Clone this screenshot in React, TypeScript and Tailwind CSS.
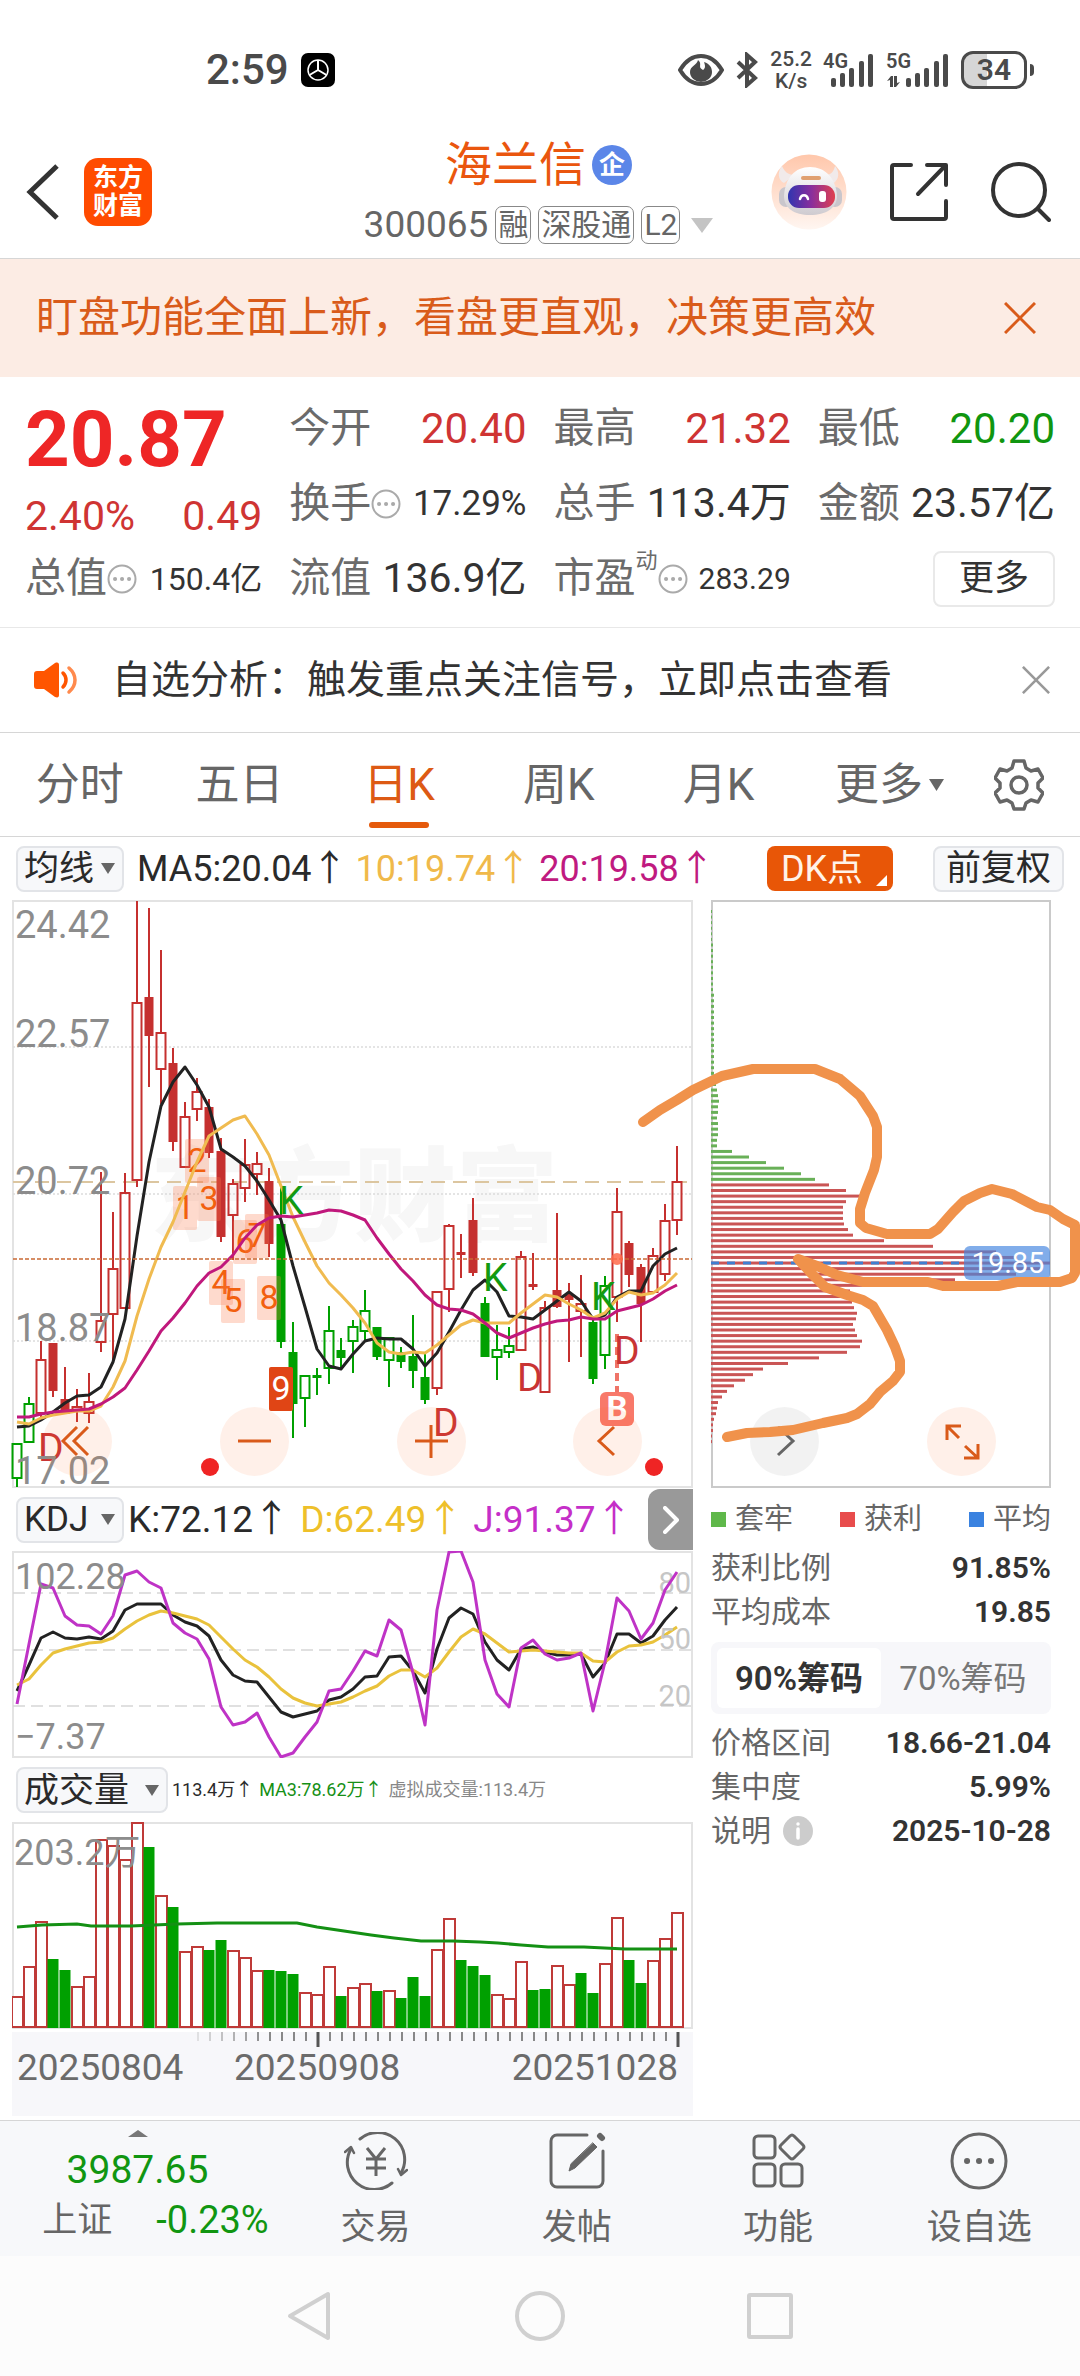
import { useState } from "react";
import type { ReactNode } from "react";
import clsx from "clsx";

type Candle = [kind: "r" | "R" | "g" | "G", high: number, top: number, bottom: number, low: number];

const RED = "#c5302f";
const GREEN = "#00a000";

// r / g = hollow body, R / G = solid body
const CANDLES: Candle[] = [
  ["g", 544, 544, 578, 587],
  ["g", 497, 504, 542, 542],
  ["r", 441, 460, 513, 518],
  ["R", 443, 443, 491, 497],
  ["R", 467, 499, 514, 514],
  ["r", 489, 507, 511, 522],
  ["r", 473, 502, 513, 523],
  ["r", 272, 421, 442, 452],
  ["r", 312, 369, 414, 463],
  ["r", 273, 293, 408, 408],
  ["r", 1, 103, 280, 287],
  ["R", 8, 97, 136, 187],
  ["r", 50, 133, 169, 204],
  ["R", 148, 163, 242, 251],
  ["r", 202, 217, 267, 267],
  ["r", 178, 192, 209, 221],
  ["R", 199, 207, 253, 258],
  ["R", 238, 251, 337, 342],
  ["r", 279, 284, 315, 360],
  ["r", 239, 265, 288, 302],
  ["r", 252, 264, 274, 295],
  ["R", 268, 281, 344, 357],
  ["G", 286, 324, 442, 448],
  ["G", 422, 452, 504, 538],
  ["g", 476, 476, 498, 527],
  ["G", 468, 475, 478, 495],
  ["g", 406, 431, 468, 484],
  ["G", 438, 450, 458, 469],
  ["g", 420, 427, 441, 473],
  ["g", 390, 411, 431, 441],
  ["G", 427, 427, 457, 460],
  ["g", 438, 438, 460, 487],
  ["G", 447, 452, 462, 468],
  ["G", 415, 456, 471, 488],
  ["G", 452, 477, 500, 504],
  ["r", 391, 392, 488, 495],
  ["r", 324, 326, 389, 412],
  ["R", 334, 352, 355, 378],
  ["R", 298, 320, 373, 376],
  ["G", 397, 403, 457, 457],
  ["g", 425, 450, 457, 480],
  ["g", 427, 446, 452, 458],
  ["r", 351, 357, 450, 450],
  ["R", 353, 384, 387, 390],
  ["r", 401, 408, 492, 493],
  ["R", 313, 390, 407, 408],
  ["R", 383, 395, 400, 462],
  ["r", 375, 404, 411, 457],
  ["G", 416, 422, 479, 484],
  ["g", 376, 386, 455, 469],
  ["r", 288, 312, 397, 422],
  ["R", 341, 343, 375, 387],
  ["R", 364, 367, 404, 442],
  ["r", 348, 356, 392, 392],
  ["r", 304, 321, 374, 381],
  ["r", 246, 282, 320, 335],
];

const MA5 = [
  527, 526, 520, 512, 503, 496, 495, 487, 462, 419, 336, 262, 206, 182, 167, 185, 207, 249, 257, 266, 281, 300, 320,
  366, 407, 449, 466, 469, 454, 441, 438, 439, 439, 449, 466, 453, 432, 410, 390, 380, 392, 416, 417, 419, 410, 401,
  392, 401, 419, 415, 397, 391, 391, 366, 354, 348,
];
const MA10 = [
  522, 524, 518, 515, 513, 511, 511, 506, 487, 461, 416, 379, 347, 322, 292, 262, 236, 228, 220, 216, 234, 255, 286,
  317, 342, 366, 383, 395, 408, 423, 443, 452, 454, 452, 453, 445, 435, 425, 420, 423, 423, 423, 413, 404, 395, 397,
  404, 410, 418, 413, 399, 392, 395, 393, 385, 373,
];
const MA20 = [
  517, 517, 514, 512, 511, 510, 509, 504, 497, 488, 470, 451, 431, 418, 403, 386, 373, 367, 355, 338, 325, 318, 316,
  317, 315, 313, 310, 311, 315, 320, 338, 354, 369, 381, 395, 405, 409, 410, 414, 423, 433, 438, 433, 428, 424, 421,
  420, 417, 419, 419, 411, 408, 405, 399, 391, 385,
];

const K_LINE = [
  140, 114, 87, 81, 87, 88, 86, 88, 80, 59, 53, 53, 53, 64, 71, 75, 85, 109, 124, 130, 131, 146, 161, 166, 163, 160,
  149, 146, 138, 126, 125, 106, 105, 120, 142, 98, 67, 57, 63, 91, 109, 119, 98, 96, 101, 104, 104, 103, 126, 112, 83,
  83, 92, 85, 69, 56,
];
const D_LINE = [
  134, 128, 114, 102, 98, 95, 92, 91, 87, 78, 70, 64, 60, 62, 65, 68, 74, 86, 98, 109, 116, 126, 138, 147, 152, 155,
  153, 151, 146, 140, 135, 125, 119, 119, 126, 117, 101, 86, 78, 83, 92, 101, 100, 99, 100, 101, 102, 102, 110, 111,
  101, 95, 94, 91, 84, 76,
];
const J_LINE = [
  153, 93, 33, 37, 65, 74, 75, 83, 65, 24, 20, 31, 37, 72, 82, 88, 108, 156, 174, 171, 162, 186, 206, 202, 186, 171,
  140, 138, 120, 100, 105, 69, 79, 122, 174, 59, 1, 0, 31, 109, 143, 156, 97, 89, 103, 109, 107, 102, 160, 111, 47, 60,
  88, 72, 39, 21,
];

const VOLUME_TOPS = [
  175, 145, 100, 137, 148, 165, 155, 18, 24, 38, 1, 25, 74, 85, 130, 125, 128, 118, 129, 136, 149, 148, 149, 152, 171,
  173, 145, 174, 166, 162, 169, 169, 176, 155, 174, 128, 97, 138, 144, 153, 173, 177, 140, 168, 167, 144, 163, 151, 171,
  142, 96, 138, 161, 139, 117, 91,
];
const VOLUME_DOWN = new Set([3, 4, 11, 13, 16, 17, 21, 22, 23, 27, 30, 32, 33, 34, 37, 38, 39, 43, 44, 47, 48, 51, 52]);

// chips held at a loss (above the price), top to bottom
const CHIPS_LOSS = [
  ...Array(6).fill(1),
  ...Array(9).fill(2),
  ...Array(16).fill(3),
  5, 6, 7, 8, 7, 7, 6, 7, 7, 7, 6, 6, 21, 38, 55, 73, 90, 104,
] as number[];
// chips in profit
const CHIPS_PROFIT = [
  118, 135, 149, 135, 132, 132, 132, 133, 137, 142, 173, 222, 285, 306, 339, 329, 305, 244, 174, 139, 136, 141, 143,
  146, 145, 142, 144, 146, 151, 149, 136, 108, 77, 52, 42, 34, 23, 16, 11, 7, 6, 5, 3, 2, 2, 1, 1,
];

const COUNT_BOXES = [286, 239, 277, 361, 379, 320, 314, 376, 467];

const SIGNALS: [string, number, number][] = [
  ["K", 267, 314],
  ["K", 471, 391],
  ["K", 579, 410],
  ["D", 26, 561],
  ["D", 505, 491],
  ["D", 421, 536],
  ["D", 602, 464],
];

const TABS = ["分时", "五日", "日K", "周K", "月K"];

const px = (i: number) => 5 + i * 12;
const toPoints = (ys: number[]) => ys.map((y, i) => `${px(i)},${y}`).join(" ");

function Triangle({ className }: { className?: string }) {
  return (
    <svg viewBox="0 0 14 11" preserveAspectRatio="none" className={className} fill="currentColor" aria-hidden="true">
      <path d="M0 0h14L7 11z" />
    </svg>
  );
}

function Close({ className }: { className?: string }) {
  return (
    <svg viewBox="0 0 32 32" className={className} fill="none" stroke="currentColor" strokeWidth="3" aria-hidden="true">
      <path d="M1 1l30 30M31 1L1 31" />
    </svg>
  );
}

function StatusBar() {
  return (
    <div className="flex h-[140px] items-center justify-between pr-[46px] pl-[206px] text-[#4a4a4a]">
      <div className="flex items-center gap-3">
        <span className="text-[42px] leading-none font-medium">2:59</span>
        <svg viewBox="0 0 34 34" className="size-[34px]" aria-hidden="true">
          <rect width="34" height="34" rx="7" />
          <g fill="none" stroke="#fff" strokeWidth="1.5">
            <circle cx="17" cy="17" r="10" />
            <path d="M17 7v10M17 17l-8.500 5M17 17l8.500 5" strokeWidth="2" />
          </g>
        </svg>
      </div>
      <div className="flex items-center gap-3">
        <svg viewBox="0 0 46 32" className="h-8 w-[46px]" aria-hidden="true">
          <path
            d="M2 16C8 6 15 2 23 2s15 4 21 14c-6 10-13 14-21 14S8 26 2 16z"
            fill="none"
            stroke="currentColor"
            strokeWidth="4"
          />
          <path d="M20 6c5 4-1 7 5 10 3-2 2-5 1-8 6 2 8 6 8 10a11 10 0 0 1-22 0c0-6 7-7 8-12z" fill="currentColor" />
        </svg>
        <svg viewBox="0 0 22 36" className="h-9 w-[22px]" fill="none" stroke="currentColor" strokeWidth="4" aria-hidden="true">
          <path d="M2 10l17 16-8 7V3l8 7L2 26" />
        </svg>
        <div className="text-center text-[21px] leading-[22px] font-medium">
          <div>25.2</div>
          <div>K/s</div>
        </div>
        <svg viewBox="0 0 50 36" className="h-9 w-[50px] overflow-visible" fill="currentColor" aria-hidden="true">
          <text x="-1" y="16" fontSize="20" fontWeight="600">
            4G
          </text>
          <rect x="7" y="26" width="5" height="9" rx="2" />
          <rect x="16" y="21" width="5" height="14" rx="2" />
          <rect x="25" y="16" width="5" height="19" rx="2" />
          <rect x="35" y="9" width="5" height="26" rx="2" />
          <rect x="44" y="2" width="5" height="33" rx="2" />
        </svg>
        <svg viewBox="0 0 63 36" className="h-9 w-[63px] overflow-visible" fill="currentColor" aria-hidden="true">
          <text x="0" y="16" fontSize="20" fontWeight="600">
            5G
          </text>
          <path d="M1 29l4-5h2v11H4v-7zM14 30l-4 5H8V24h3v7z" />
          <rect x="20" y="26" width="5" height="9" rx="2" />
          <rect x="29" y="21" width="5" height="14" rx="2" />
          <rect x="38" y="16" width="5" height="19" rx="2" />
          <rect x="48" y="9" width="5" height="26" rx="2" />
          <rect x="57" y="2" width="5" height="33" rx="2" />
        </svg>
        <div className="flex items-center gap-[3px]">
          <div className="flex h-[38px] w-[66px] items-center justify-center rounded-xl border-[3px] border-current bg-linear-to-r from-[#d6d6d6] from-38% to-white to-38% text-[30px] leading-none font-semibold">
            34
          </div>
          <div className="h-3 w-1 rounded-r bg-current" />
        </div>
      </div>
    </div>
  );
}

function RobotAvatar() {
  return (
    <svg viewBox="0 0 76 76" className="size-[76px]" aria-hidden="true">
      <defs>
        <linearGradient id="halo" x1="0" y1="0" x2="0" y2="1">
          <stop offset="0" stopColor="#ffc7ab" />
          <stop offset="1" stopColor="#fff6f1" />
        </linearGradient>
        <linearGradient id="visor">
          <stop offset="0" stopColor="#3035b0" />
          <stop offset="0.500" stopColor="#8a2f9c" />
          <stop offset="1" stopColor="#e0404f" />
        </linearGradient>
        <linearGradient id="shell" x1="0" y1="0" x2="0" y2="1">
          <stop offset="0" stopColor="#fff" />
          <stop offset="1" stopColor="#cfcbd0" />
        </linearGradient>
      </defs>
      <circle cx="38" cy="38" r="37.500" fill="url(#halo)" />
      <path d="M11 12c-5 6-4 14 2 17l10-8c-6 0-10-4-12-9zM64 12c5 6 4 13-1 17l-8-8c5 0 8-4 9-9z" fill="#f1eaea" />
      <rect x="8" y="33" width="14" height="20" rx="7" fill="#c9c6cc" />
      <rect x="57" y="33" width="14" height="20" rx="7" fill="#c9c6cc" />
      <path d="M39 13c15 0 26 11 27 29 0 12-11 19-27 19S13 54 13 42c1-18 11-29 26-29z" fill="url(#shell)" />
      <rect x="17" y="31" width="47" height="23" rx="11" fill="url(#visor)" />
      <path d="M29 45c1-5 7-5 8 0" fill="none" stroke="#fff" strokeWidth="2.500" strokeLinecap="round" />
      <rect x="48" y="37" width="7" height="11" rx="3" fill="#fff" />
      <rect x="30" y="22" width="20" height="4" rx="2" fill="#e0a070" />
    </svg>
  );
}

function Header() {
  return (
    <header className="grid h-[119px] grid-cols-[1fr_auto_1fr] items-center border-b border-[#d6d6d6] pr-[29px] pb-4 pl-[26px]">
      <div className="flex items-center gap-6">
        <button type="button" aria-label="返回">
          <svg viewBox="0 0 34 56" className="h-14 w-[34px]" fill="none" stroke="#333" strokeWidth="5" aria-hidden="true">
            <path d="M31 2L4 28l27 26" />
          </svg>
        </button>
        <div className="flex size-[68px] flex-col items-center justify-center rounded-[14px] bg-[#ff4b00] text-[25px] leading-7 font-bold text-white">
          <span>东方</span>
          <span>财富</span>
        </div>
      </div>

      <div className="flex flex-col items-center gap-[17px]">
        <div className="flex items-center gap-[6px]">
          <h1 className="text-[47px] leading-[49px] text-[#ea560e]">海兰信</h1>
          <span className="flex size-10 items-center justify-center rounded-full bg-[#5b86e8] text-[26px] leading-none font-bold text-white">
            企
          </span>
        </div>
        <button type="button" className="flex items-center gap-[7px] text-[#666]">
          <span className="text-[37px] leading-[38px]">300065</span>
          {["融", "深股通", "L2"].map((tag) => (
            <span
              key={tag}
              className="flex h-[38px] items-center rounded-[7px] border border-[#888] px-[2px] text-[30px] leading-none"
            >
              {tag}
            </span>
          ))}
          <Triangle className="ml-1 h-[15px] w-[22px] text-[#c4c4c4]" />
        </button>
      </div>

      <div className="flex items-center justify-end gap-[43px]">
        <RobotAvatar />
        <button type="button" aria-label="分享">
          <svg
            viewBox="0 0 58 58"
            className="size-[58px]"
            fill="none"
            stroke="#333"
            strokeWidth="4"
            strokeLinecap="round"
            strokeLinejoin="round"
            aria-hidden="true"
          >
            <path d="M21 2H4a2 2 0 0 0-2 2v50a2 2 0 0 0 2 2h50a2 2 0 0 0 2-2V38M37 2h19v20M55 3L28 31" />
          </svg>
        </button>
        <button type="button" aria-label="搜索">
          <svg
            viewBox="0 0 60 60"
            className="size-[60px]"
            fill="none"
            stroke="#333"
            strokeWidth="4"
            strokeLinecap="round"
            aria-hidden="true"
          >
            <circle cx="28" cy="28" r="26" />
            <path d="M47 47l11 11" />
          </svg>
        </button>
      </div>
    </header>
  );
}

function Banner({ onClose }: { onClose: () => void }) {
  return (
    <div className="flex h-[118px] items-center justify-between bg-[#fcece4] pr-11 pl-9 text-[#d95b1a]">
      <p className="text-[42px] leading-none">盯盘功能全面上新，看盘更直观，决策更高效</p>
      <button type="button" aria-label="关闭" onClick={onClose}>
        <Close className="size-8" />
      </button>
    </div>
  );
}

function Quote({ label, sup, hint, children }: { label: string; sup?: string; hint?: boolean; children: ReactNode }) {
  return (
    <div className="flex items-center justify-between whitespace-nowrap">
      <span className="flex items-center">
        <span className="text-[41px] leading-none text-[#6b6b6b]">{label}</span>
        {sup && <span className="-mt-2 self-start text-[22px] leading-none text-[#6b6b6b]">{sup}</span>}
        {hint && (
          <svg viewBox="0 0 30 30" className="size-[30px]" fill="none" stroke="#aaa" strokeWidth="2" aria-hidden="true">
            <circle cx="15" cy="15" r="13.500" />
            <path d="M8 15h.1M15 15h.1M22 15h.1" strokeWidth="4" strokeLinecap="round" />
          </svg>
        )}
      </span>
      {children}
    </div>
  );
}

function QuotePanel() {
  return (
    <section className="grid auto-rows-[75px] grid-cols-4 gap-x-[27px] border-b border-[#e8e8e8] px-[25px] pt-[14px] pb-[11px]">
      <div className="row-span-2">
        <div className="flex h-[98px] items-center text-[78px] leading-none font-bold text-[#ee2626]">20.87</div>
        <div className="flex h-[54px] items-center justify-between text-[41px] leading-none text-[#cf3433]">
          <span>2.40%</span>
          <span>0.49</span>
        </div>
      </div>
      <Quote label="今开">
        <span className="text-[42px] leading-none text-[#cf3433]">20.40</span>
      </Quote>
      <Quote label="最高">
        <span className="text-[42px] leading-none text-[#cf3433]">21.32</span>
      </Quote>
      <Quote label="最低">
        <span className="text-[42px] leading-none text-[#109610]">20.20</span>
      </Quote>
      <Quote label="换手" hint>
        <span className="text-[35px] leading-none text-[#333]">17.29%</span>
      </Quote>
      <Quote label="总手">
        <span className="text-[41px] leading-none text-[#333]">113.4万</span>
      </Quote>
      <Quote label="金额">
        <span className="text-[41px] leading-none text-[#333]">23.57亿</span>
      </Quote>
      <Quote label="总值" hint>
        <span className="text-[32px] leading-none text-[#333]">150.4亿</span>
      </Quote>
      <Quote label="流值">
        <span className="text-[41px] leading-none text-[#333]">136.9亿</span>
      </Quote>
      <Quote label="市盈" sup="动" hint>
        <span className="text-[30px] leading-none text-[#333]">283.29</span>
      </Quote>
      <div className="flex items-center justify-end">
        <button type="button" className="h-14 rounded-lg border-2 border-[#e9e9e9] px-6 text-[35px] leading-none text-[#333]">
          更多
        </button>
      </div>
    </section>
  );
}

function Notice({ onClose }: { onClose: () => void }) {
  return (
    <div className="flex h-[105px] items-center border-b border-[#d6d6d6] pr-[30px] pl-[34px]">
      <svg viewBox="0 0 45 36" className="h-9 w-[45px]" aria-hidden="true">
        <path d="M3 9h7L21 1c3-1 4 0 4 2v30c0 2-1 3-4 2l-11-8H3c-2 0-3-1-3-3V12c0-2 1-3 3-3z" fill="#ff5500" />
        <path d="M29 11c4 4 4 10 0 14" fill="none" stroke="#ff5500" strokeWidth="3.500" strokeLinecap="round" />
        <path d="M35 6c8 7 8 17 0 24" fill="none" stroke="#ff8a4d" strokeWidth="3.500" strokeLinecap="round" />
      </svg>
      <a href="#analysis" className="ml-[33px] flex-1 text-[39px] leading-none text-[#333]">
        自选分析：触发重点关注信号，立即点击查看
      </a>
      <button type="button" aria-label="关闭" onClick={onClose}>
        <Close className="size-7 text-[#999]" />
      </button>
    </div>
  );
}

function PeriodTabs() {
  const [active, setActive] = useState("日K");
  return (
    <nav className="flex h-[104px] items-stretch border-b border-[#d6d6d6] text-[44px] leading-none text-[#666]">
      {TABS.map((tab) => (
        <button
          key={tab}
          type="button"
          onClick={() => setActive(tab)}
          className={clsx("relative flex-1", tab === active && "text-[#dd5a14]")}
        >
          {tab}
          {tab === active && (
            <span className="absolute bottom-2 left-1/2 h-[6px] w-[60px] -translate-x-1/2 rounded-full bg-[#e55a0c]" />
          )}
        </button>
      ))}
      <button type="button" className="flex flex-1 items-center justify-end gap-[6px]">
        更多
        <Triangle className="mr-[14px] h-3 w-[15px]" />
      </button>
      <button type="button" aria-label="设置" className="flex w-[122px] items-center justify-center">
        <svg viewBox="0 0 50 52" className="h-[52px] w-[50px]" fill="none" stroke="#666" strokeWidth="3.500" aria-hidden="true">
          <path
            d="M20 2h10l2 7 5 3 7-2 5 9-5 5v5l5 5-5 9-7-2-5 3-2 6H20l-2-6-5-3-7 2-5-9 5-5v-5l-5-5 5-9 7 2 5-3z"
            strokeLinejoin="round"
          />
          <circle cx="25" cy="26" r="8" />
        </svg>
      </button>
    </nav>
  );
}

function IndicatorSelect({ label, options, wide }: { label: string; options: string[]; wide?: boolean }) {
  return (
    <label className="relative flex shrink-0 items-center">
      <select
        aria-label={label}
        className={clsx(
          "h-[46px] appearance-none rounded-lg border-2 border-[#e2e4e8] bg-[#f7f8fa] pl-[6px] text-[35px] leading-none text-[#2a2a2a]",
          wide ? "w-[152px]" : "w-[108px]",
        )}
      >
        {options.map((o) => (
          <option key={o}>{o}</option>
        ))}
      </select>
      <Triangle className="pointer-events-none absolute right-[9px] h-[11px] w-[14px] text-[#666]" />
    </label>
  );
}

function MaBar() {
  return (
    <div className="flex h-[63px] items-center pr-4 pl-4 text-[36px] leading-none whitespace-nowrap">
      <IndicatorSelect label="主图指标" options={["均线", "BOLL"]} />
      <div className="ml-[13px] flex flex-1 gap-2">
        <span className="text-[#2a2a2a]">MA5:20.04↑</span>
        <span className="text-[#f0b94a]">10:19.74↑</span>
        <span className="text-[#c01a80]">20:19.58↑</span>
      </div>
      <button
        type="button"
        className="relative mr-10 h-[45px] w-[126px] rounded-lg bg-[#e85607] pr-4 leading-none text-[#fff3e8]"
      >
        DK点
        <svg viewBox="0 0 11 11" className="absolute right-[6px] bottom-[5px] size-[11px]" fill="#fff" aria-hidden="true">
          <path d="M11 0v11H0z" />
        </svg>
      </button>
      <button
        type="button"
        className="h-[46px] rounded-lg border-2 border-[#e2e4e8] bg-[#f7f8fa] px-[11px] text-[35px] leading-none text-[#2a2a2a]"
      >
        前复权
      </button>
    </div>
  );
}

function CandleChart() {
  return (
    <svg viewBox="0 0 681 588" className="block w-full overflow-visible" role="img" aria-label="日K线">
      <text x="138" y="333" fontSize="102" fontWeight="900" fill="#f7f7f7">
        东方财富
      </text>
      <rect x="1" y="1" width="679" height="586" fill="none" stroke="#e3e3e3" strokeWidth="2" />
      <g stroke="#dcdcdc" strokeWidth="1.500" strokeDasharray="2 2">
        <path d="M1 147h679M1 294h679M1 441h679" />
      </g>
      <path d="M1 282h675" stroke="#dcc6a0" strokeWidth="2" strokeDasharray="14 8" />
      {CANDLES.map(([kind, high, top, bottom, low], i) => {
        const color = kind.toLowerCase() === "r" ? RED : GREEN;
        const solid = kind === "R" || kind === "G";
        return (
          <g key={i} stroke={color} strokeWidth="2">
            <path d={`M${px(i)} ${high}V${top}M${px(i)} ${bottom}V${low}`} />
            {solid ? (
              <rect x={px(i) - 4.5} y={top} width="9" height={bottom - top} fill={color} stroke="none" />
            ) : (
              <rect x={px(i) - 4.5} y={top} width="9" height={bottom - top} fill="none" />
            )}
          </g>
        );
      })}
      <g fontSize="34" textAnchor="middle">
        {COUNT_BOXES.map((y, i) => {
          const last = i === COUNT_BOXES.length - 1;
          return (
            <g key={i}>
              <rect
                x={161 + i * 12}
                y={y}
                width="24"
                height="44"
                rx="2"
                fill={last ? "#e04515" : "#fb7a4a"}
                fillOpacity={last ? 1 : 0.28}
              />
              <text x={173 + i * 12} y={y + 33} fill={last ? "#fff" : "#f2600f"}>
                {i + 1}
              </text>
            </g>
          );
        })}
      </g>
      <g fill="none" strokeWidth="3" strokeLinejoin="round">
        <polyline points={toPoints(MA5)} stroke="#222" />
        <polyline points={toPoints(MA10)} stroke="#f0bb50" />
        <polyline points={toPoints(MA20)} stroke="#c0187c" />
      </g>
      <path d="M1 359h679" stroke="#c96a35" strokeWidth="1.500" strokeDasharray="4 2" />
      <path d="M605 434v58" stroke="#ef7468" strokeWidth="4" strokeDasharray="8 5" />
      <circle cx="605" cy="359" r="6" fill="#ff6a4a" fillOpacity="0.850" />
      <g fontSize="39">
        {SIGNALS.map(([letter, x, y]) => (
          <text key={`${x}`} x={x} y={y} fill={letter === "K" ? "#129a12" : "#c93434"}>
            {letter}
          </text>
        ))}
      </g>
      <rect x="588" y="492" width="34" height="34" rx="6" fill="#f8796a" />
      <text x="605" y="520" fontSize="33" fontWeight="700" fill="#fff" textAnchor="middle">
        B
      </text>
      <circle cx="198" cy="567" r="9" fill="#ef2424" />
      <circle cx="642" cy="567" r="9" fill="#ef2424" />
      <g fontSize="38" fill="#8c8c8c">
        <text x="3" y="38">24.42</text>
        <text x="3" y="147">22.57</text>
        <text x="3" y="294">20.72</text>
        <text x="3" y="441">18.87</text>
        <text x="3" y="584">17.02</text>
      </g>
    </svg>
  );
}

function ChipChart() {
  const step = 5.58;
  return (
    <svg viewBox="0 0 340 588" className="block w-full" role="img" aria-label="筹码分布">
      <rect x="1" y="1" width="338" height="586" fill="none" stroke="#cacaca" strokeWidth="2" />
      <g fill="#69b058">
        {CHIPS_LOSS.map((w, i) => (
          <rect key={i} x="0" y={10 + i * step} width={w} height="3" />
        ))}
      </g>
      <g fill="#ca5555">
        {CHIPS_PROFIT.map((w, i) => (
          <rect key={i} x="0" y={10 + (CHIPS_LOSS.length + i) * step} width={w} height="3" />
        ))}
      </g>
      <path d="M0 363h253" stroke="#3f7fd0" strokeWidth="3" strokeDasharray="8 8" />
      <rect x="253" y="346" width="86" height="34" rx="6" fill="#4686e0" fillOpacity="0.680" />
      <text x="297" y="373" fontSize="29" fill="#fff" textAnchor="middle">
        19.85
      </text>
    </svg>
  );
}

const TOOLS: { label: string; gray?: boolean; path: string }[] = [
  { label: "最早", path: "M34 20L20 34l14 14M45 20L31 34l14 14" },
  { label: "缩小", path: "M18 34h33" },
  { label: "放大", path: "M18 34h33M34 18v33" },
  { label: "向左", path: "M41 20L26 34l15 14" },
  { label: "向右", gray: true, path: "M28 20l15 14-15 14" },
  { label: "全屏", path: "M20 33V19h14M20 19l12 12M51 37v14H37M51 51L38 39" },
];

function ChartTools() {
  return (
    <div className="absolute inset-x-0 top-[507px] flex justify-between pr-[84px] pl-[43px]">
      {TOOLS.map(({ label, gray, path }) => (
        <button
          key={label}
          type="button"
          aria-label={label}
          className={clsx(
            "size-[69px] rounded-full",
            gray ? "bg-black/5 text-[#666]" : "bg-[#ff6a20]/10 text-[#d95a1a]",
          )}
        >
          <svg viewBox="0 0 69 69" className="size-full" fill="none" stroke="currentColor" strokeWidth="3" aria-hidden="true">
            <path d={path} />
          </svg>
        </button>
      ))}
    </div>
  );
}

function Scribble() {
  return (
    <svg viewBox="0 0 1080 588" className="pointer-events-none absolute inset-x-0 top-0 w-full" aria-hidden="true">
      <path
        d="M643 222L660 210L677 200L693 190L722 176L753 169H815L840 179L860 196L873 216L877 227V257L874 270L865 293L860 309V323L866 328L887 334H930L938 329L953 312L964 301L980 293L992 289L1012 294L1037 307L1050 310L1063 319L1075 325V373L1072 378L1060 382H1017L998 386H943L928 382H863L837 375L817 366L798 359L812 374L825 387L847 395L863 400L873 406L887 430L895 447L900 461V472L893 481L880 492L870 504L857 514L847 518L823 523L793 530L770 532L747 533L727 537"
        fill="none"
        stroke="#f0924b"
        strokeWidth="10"
        strokeLinecap="round"
        strokeLinejoin="round"
      />
    </svg>
  );
}

function KdjPanel() {
  return (
    <>
      <div className="flex h-[63px] items-center pl-1 text-[37px] leading-none whitespace-nowrap">
        <IndicatorSelect label="副图指标" options={["KDJ", "MACD"]} />
        <div className="ml-1 flex flex-1 gap-[10px]">
          <span className="text-[#2a2a2a]">K:72.12↑</span>
          <span className="text-[#eec02a]">D:62.49↑</span>
          <span className="text-[#c52fc8]">J:91.37↑</span>
        </div>
        <button
          type="button"
          aria-label="更多指标"
          className="flex h-[61px] w-[45px] items-center justify-center rounded-l-xl bg-[#999]"
        >
          <svg
            viewBox="0 0 16 28"
            className="h-7 w-4"
            fill="none"
            stroke="#fff"
            strokeWidth="4"
            strokeLinecap="round"
            strokeLinejoin="round"
            aria-hidden="true"
          >
            <path d="M2 2l12 12L2 26" />
          </svg>
        </button>
      </div>
      <svg viewBox="0 0 681 207" className="block w-full" role="img" aria-label="KDJ">
        <rect x="1" y="1" width="679" height="205" fill="none" stroke="#e3e3e3" strokeWidth="2" />
        <path d="M1 42h679M1 99h679M1 155h679" stroke="#d6d6d6" strokeWidth="1.500" strokeDasharray="12 6" />
        <g fill="none" strokeWidth="3" strokeLinejoin="round">
          <polyline points={toPoints(K_LINE)} stroke="#222" />
          <polyline points={toPoints(D_LINE)} stroke="#e9c23c" />
        </g>
        <g fontSize="29" fill="#c6c6c6" textAnchor="end">
          <text x="679" y="42">80</text>
          <text x="679" y="98">50</text>
          <text x="679" y="155">20</text>
        </g>
        <polyline points={toPoints(J_LINE)} fill="none" stroke="#bf33c6" strokeWidth="3" strokeLinejoin="round" />
        <g fontSize="36" fill="#8c8c8c">
          <text x="3" y="38">102.28</text>
          <text x="3" y="198">−7.37</text>
        </g>
      </svg>
    </>
  );
}

function VolumePanel() {
  return (
    <>
      <div className="flex h-16 items-center pl-1 text-[18px] leading-none whitespace-nowrap">
        <IndicatorSelect label="成交量指标" options={["成交量", "成交额"]} wide />
        <div className="ml-1 flex gap-[6px]">
          <span className="text-[#2a2a2a]">113.4万↑</span>
          <span className="text-[#169016]">MA3:78.62万↑</span>
          <span className="text-[#888]">虚拟成交量:113.4万</span>
        </div>
      </div>
      <svg viewBox="0 0 681 207" className="block w-full" role="img" aria-label="成交量">
        <rect x="1" y="1" width="679" height="205" fill="none" stroke="#e3e3e3" strokeWidth="2" />
        {VOLUME_TOPS.map((top, i) =>
          VOLUME_DOWN.has(i) ? (
            <rect key={i} x={px(i) - 5.5} y={top} width="11" height={206 - top} fill={GREEN} />
          ) : (
            <rect
              key={i}
              x={px(i) - 5}
              y={top}
              width="11"
              height={205 - top}
              fill="#fff"
              stroke="#bf3a38"
              strokeWidth="2"
            />
          ),
        )}
        <polyline
          points="5,105 30,103 65,102 79,104 119,104 165,102 205,101 242,101 269,101 285,101 305,105 332,109 359,113 382,116 409,119 441,119 468,120 486,121 509,123 536,125 572,125 613,127 631,127 665,127"
          fill="none"
          stroke="#149014"
          strokeWidth="3"
        />
        <text x="2" y="43" fontSize="36" fill="#8c8c8c">
          203.2万
        </text>
      </svg>
      <svg viewBox="0 0 681 84" className="mt-[3px] block w-full bg-[#f7f7fa]" role="img" aria-label="日期">
        {Array.from({ length: 41 }, (_, n) => n + 15).map((i) => {
          const long = i === 25 || i === 55;
          return (
            <path
              key={i}
              d={`M${px(i) + 1} 0v${long ? 15 : 9}`}
              stroke={long ? "#555" : "#888"}
              strokeWidth={long ? 3 : 2}
              opacity={i < 21 ? 0.2 + (i - 15) * 0.14 : 1}
            />
          );
        })}
        <g fontSize="37" fill="#6b6b6b">
          <text x="5" y="48">20250804</text>
          <text x="222" y="48">20250908</text>
          <text x="666" y="48" textAnchor="end">
            20251028
          </text>
        </g>
      </svg>
    </>
  );
}

function InfoRow({ label, value, info }: { label: string; value: string; info?: boolean }) {
  return (
    <div className="flex h-11 items-center justify-between text-[30px] leading-none">
      <dt className="flex items-center gap-3 text-[#666]">
        {label}
        {info && (
          <svg viewBox="0 0 30 30" className="size-[30px]" aria-hidden="true">
            <circle cx="15" cy="15" r="15" fill="#ccc" />
            <path d="M15 13v9M15 8v.1" stroke="#fff" strokeWidth="3.500" strokeLinecap="round" />
          </svg>
        )}
      </dt>
      <dd className="font-semibold text-[#333]">{value}</dd>
    </div>
  );
}

function ChipInfo() {
  const [range, setRange] = useState("90%筹码");
  return (
    <div>
      <ul className="flex h-[58px] items-center justify-between pt-1 text-[29px] leading-none text-[#666]">
        <li className="flex items-center gap-[9px]">
          <span className="size-[15px] bg-[#5fb84a]" />
          套牢
        </li>
        <li className="flex items-center gap-[9px]">
          <span className="size-[15px] bg-[#e84c4c]" />
          获利
        </li>
        <li className="flex items-center gap-[9px]">
          <span className="size-[15px] bg-[#3a82e0]" />
          平均
        </li>
      </ul>
      <dl>
        <InfoRow label="获利比例" value="91.85%" />
        <InfoRow label="平均成本" value="19.85" />
      </dl>
      <div className="mt-2 flex h-[72px] rounded-lg bg-[#f7f7fa] p-[6px] text-[33px] leading-none">
        {["90%筹码", "70%筹码"].map((item) => (
          <button
            key={item}
            type="button"
            onClick={() => setRange(item)}
            className={clsx(
              "flex-1 rounded-md whitespace-nowrap",
              item === range ? "bg-white font-semibold text-[#333]" : "text-[#777]",
            )}
          >
            {item}
          </button>
        ))}
      </div>
      <dl className="mt-[7px]">
        <InfoRow label="价格区间" value="18.66-21.04" />
        <InfoRow label="集中度" value="5.99%" />
        <InfoRow label="说明" value="2025-10-28" info />
      </dl>
    </div>
  );
}

function NavItem({ label, children }: { label: string; children: ReactNode }) {
  return (
    <button type="button" className="flex flex-1 flex-col items-center gap-5 pt-[11px]">
      <svg
        viewBox="0 0 64 58"
        className="h-[58px] w-16"
        fill="none"
        stroke="#666"
        strokeWidth="3"
        strokeLinecap="round"
        strokeLinejoin="round"
        aria-hidden="true"
      >
        {children}
      </svg>
      <span className="text-[35px] leading-none text-[#666]">{label}</span>
    </button>
  );
}

function BottomBar() {
  return (
    <footer className="flex h-[136px] border-t border-[#d6d6d6] bg-[#f7f8fa]">
      <button type="button" className="flex w-[275px] flex-col items-center pt-[9px] leading-none">
        <Triangle className="h-[7px] w-5 rotate-180 text-[#777]" />
        <span className="mt-[14px] text-[39px] text-[#119611]">3987.65</span>
        <span className="mt-[11px] ml-9 flex items-center gap-11">
          <span className="text-[35px] text-[#666]">上证</span>
          <span className="text-[38px] text-[#119611]">-0.23%</span>
        </span>
      </button>
      <NavItem label="交易">
        <path d="M16 7a27 27 0 0 1 41 34M48 51A27 27 0 0 1 7 17" />
        <path d="M1 20l6-5 3 6M63 38l-6 5-3-6" strokeWidth="2.500" />
        <path d="M23 16l9 11 9-11M32 27v17M22 27h20M22 36h20" strokeLinecap="butt" />
      </NavItem>
      <NavItem label="发帖">
        <path d="M42 3H12a6 6 0 0 0-6 6v40a6 6 0 0 0 6 6h40a6 6 0 0 0 6-6V19" />
        <path d="M48 11l4 4-22 21-6 3 2-7z" fill="#666" strokeWidth="1" />
        <path d="M55 4l2 2" strokeWidth="6" />
      </NavItem>
      <NavItem label="功能">
        <rect x="8" y="4" width="21" height="22" rx="4" />
        <rect x="8" y="32" width="21" height="22" rx="4" />
        <rect x="35" y="32" width="21" height="22" rx="4" />
        <path d="M44 4q2-2 4 0l9 9q2 2 0 4l-9 9q-2 2-4 0l-9-9q-2-2 0-4z" />
      </NavItem>
      <NavItem label="设自选">
        <circle cx="32" cy="29" r="27" />
        <path d="M20 29h.1M32 29h.1M44 29h.1" strokeWidth="6" />
      </NavItem>
    </footer>
  );
}

function SystemNav() {
  return (
    <nav
      aria-label="系统导航"
      className="flex h-[120px] items-center justify-center gap-[180px] bg-[#fcfcfc] text-[#d0d0d0]"
    >
      <button type="button" aria-label="后退">
        <svg viewBox="0 0 50 50" className="size-[50px]" fill="none" stroke="currentColor" strokeWidth="4" strokeLinejoin="round">
          <path d="M43 3v44L5 25z" />
        </svg>
      </button>
      <button type="button" aria-label="主屏幕">
        <svg viewBox="0 0 50 50" className="size-[50px]" fill="none" stroke="currentColor" strokeWidth="4">
          <circle cx="25" cy="25" r="23" />
        </svg>
      </button>
      <button type="button" aria-label="最近任务">
        <svg viewBox="0 0 50 50" className="size-[50px]" fill="none" stroke="currentColor" strokeWidth="4">
          <rect x="4" y="4" width="42" height="42" rx="1" />
        </svg>
      </button>
    </nav>
  );
}

export default function App() {
  const [showBanner, setShowBanner] = useState(true);
  const [showNotice, setShowNotice] = useState(true);

  return (
    <div className="bg-white font-[family-name:Roboto,'Noto_Sans_CJK_SC',sans-serif]">
      <StatusBar />
      <Header />
      {showBanner && <Banner onClose={() => setShowBanner(false)} />}
      <QuotePanel />
      {showNotice && <Notice onClose={() => setShowNotice(false)} />}
      <PeriodTabs />
      <MaBar />
      <main className="relative grid grid-cols-[681fr_340fr] gap-[18px] pr-[29px] pb-1 pl-3">
        <div className="min-w-0">
          <CandleChart />
          <KdjPanel />
          <VolumePanel />
        </div>
        <div className="min-w-0">
          <ChipChart />
          <ChipInfo />
        </div>
        <ChartTools />
        <Scribble />
      </main>
      <BottomBar />
      <SystemNav />
    </div>
  );
}
